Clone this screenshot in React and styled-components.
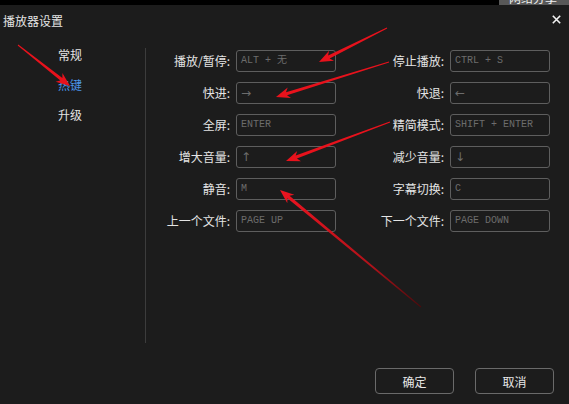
import React from "react";
import styled, { createGlobalStyle } from "styled-components";

const Global = createGlobalStyle`
  html, body { margin: 0; padding: 0; background: #1c1c1c; }
  body { font-family: "Noto Sans CJK SC", "Noto Sans", sans-serif; overflow: hidden; }
  #root { width: 569px; height: 404px; position: relative; }
`;

const Page = styled.div`
  width: 569px;
  height: 404px;
  background: #1c1c1c;
  display: flex;
  flex-direction: column;
  position: relative;
  overflow: hidden;
`;

const TopStrip = styled.div`
  height: 5px;
  background: #000;
  display: flex;
  justify-content: flex-end;
  flex-shrink: 0;
`;

const GrayTab = styled.div`
  width: 70px;
  height: 5px;
  background: #585858;
  overflow: hidden;
  color: #f0f0f0;
  font-size: 12px;
  line-height: 12px;
  padding-left: 10px;
  box-sizing: border-box;
  white-space: nowrap;
`;

const TabText = styled.div`
  margin-top: -8px;
`;

const TitleBar = styled.div`
  height: 30px;
  display: flex;
  align-items: center;
  justify-content: space-between;
  padding: 0 8px 0 3px;
  flex-shrink: 0;
`;

const Title = styled.div`
  color: #e4e4e4;
  font-size: 12px;
`;

const Close = styled.div`
  width: 9px;
  height: 9px;
  display: flex;
  margin-top: -1px;
`;

const Body = styled.div`
  height: 333px;
  display: flex;
  flex-shrink: 0;
`;

const Nav = styled.div`
  width: 145px;
  padding: 5px 0 0 58px;
  box-sizing: border-box;
  display: flex;
  flex-direction: column;
`;

const NavItem = styled.div`
  height: 30px;
  line-height: 30px;
  font-size: 12px;
  color: ${(p) => (p.$active ? "#4b95e6" : "#e4e4e4")};
`;

const Divider = styled.div`
  width: 1px;
  height: 295px;
  margin-top: 13px;
  background: #3c3c3c;
`;

const Form = styled.div`
  padding: 15px 0 0 14px;
  display: grid;
  grid-template-columns: 70px 100px 102px 100px;
  grid-auto-rows: 22px;
  column-gap: 6px;
  row-gap: 10px;
  align-content: start;
`;

const Label = styled.div`
  color: #e4e4e4;
  font-size: 12px;
  text-align: right;
  line-height: 22px;
  white-space: nowrap;
`;

const KeyBox = styled.div`
  border: 1px solid #5e5e5e;
  border-radius: 3px;
  box-sizing: border-box;
  height: 22px;
  padding-left: 4px;
  color: #6c6c6c;
  font-family: ${(p) =>
    p.$glyph ? '"DejaVu Sans", sans-serif' : '"Liberation Mono", "Noto Sans CJK SC", monospace'};
  font-size: ${(p) => (p.$glyph ? "12px" : "10px")};
  line-height: 20px;
  white-space: nowrap;
  overflow: hidden;
`;

const Footer = styled.div`
  display: flex;
  justify-content: flex-end;
  gap: 21px;
  padding-right: 15px;
`;

const Button = styled.div`
  width: 79px;
  height: 26px;
  border: 1px solid #6a6a6a;
  border-radius: 4px;
  box-sizing: border-box;
  display: flex;
  align-items: center;
  justify-content: center;
  color: #e8e8e8;
  font-size: 12px;
`;

const Overlay = styled.svg`
  position: absolute;
  left: 0;
  top: 0;
  pointer-events: none;
`;

function arrowPoints(x1, y1, x2, y2, tw = 1, sw = 3.2, hl = 14, hw = 11) {
  const dx = x2 - x1;
  const dy = y2 - y1;
  const L = Math.hypot(dx, dy);
  const ux = dx / L;
  const uy = dy / L;
  const nx = -uy;
  const ny = ux;
  const bx = x2 - ux * hl;
  const by = y2 - uy * hl;
  const nbx = x2 - ux * (hl - 3);
  const nby = y2 - uy * (hl - 3);
  const pts = [
    [x1 + (nx * tw) / 2, y1 + (ny * tw) / 2],
    [nbx + (nx * sw) / 2, nby + (ny * sw) / 2],
    [bx + (nx * hw) / 2, by + (ny * hw) / 2],
    [x2, y2],
    [bx - (nx * hw) / 2, by - (ny * hw) / 2],
    [nbx - (nx * sw) / 2, nby - (ny * sw) / 2],
    [x1 - (nx * tw) / 2, y1 - (ny * tw) / 2],
  ];
  return pts.map((p) => p.map((v) => v.toFixed(1)).join(",")).join(" ");
}

const arrows = [
  { id: "a", from: [387, 28], to: [319, 62] },
  { id: "b", from: [389, 62], to: [276, 97] },
  { id: "c", from: [390, 122], to: [286, 161] },
  { id: "d", from: [421, 307], to: [280, 190], fade: true },
  { id: "e", from: [18, 45], to: [70, 86] },
];

const glyphs = new Set(["→", "←", "↑", "↓"]);

const rows = [
  ["播放/暂停:", "ALT + 无", "停止播放:", "CTRL + S"],
  ["快进:", "→", "快退:", "←"],
  ["全屏:", "ENTER", "精简模式:", "SHIFT + ENTER"],
  ["增大音量:", "↑", "减少音量:", "↓"],
  ["静音:", "M", "字幕切换:", "C"],
  ["上一个文件:", "PAGE UP", "下一个文件:", "PAGE DOWN"],
];

export default function App() {
  return (
    <>
      <Global />
      <Page>
        <TopStrip>
          <GrayTab>
            <TabText>网络分享</TabText>
          </GrayTab>
        </TopStrip>
        <TitleBar>
          <Title>播放器设置</Title>
          <Close>
            <svg width="9" height="9" viewBox="0 0 9 9">
              <path d="M0.8 0.8 L8.2 8.2 M8.2 0.8 L0.8 8.2" stroke="#f2f2f2" strokeWidth="1.6" />
            </svg>
          </Close>
        </TitleBar>
        <Body>
          <Nav>
            <NavItem>常规</NavItem>
            <NavItem $active>热键</NavItem>
            <NavItem>升级</NavItem>
          </Nav>
          <Divider />
          <Form>
            {rows.map((r, i) => (
              <React.Fragment key={i}>
                <Label>{r[0]}</Label>
                <KeyBox $glyph={glyphs.has(r[1])}>{r[1]}</KeyBox>
                <Label>{r[2]}</Label>
                <KeyBox $glyph={glyphs.has(r[3])}>{r[3]}</KeyBox>
              </React.Fragment>
            ))}
          </Form>
        </Body>
        <Footer>
          <Button>确定</Button>
          <Button>取消</Button>
        </Footer>
        <Overlay width="569" height="404" viewBox="0 0 569 404">
          <defs>
            <linearGradient id="fadeD" gradientUnits="userSpaceOnUse" x1="421" y1="307" x2="280" y2="190">
              <stop offset="0" stopColor="#4a0a0c" />
              <stop offset="0.35" stopColor="#b0121a" />
              <stop offset="1" stopColor="#ee1420" />
            </linearGradient>
          </defs>
          {arrows.map((a) => (
            <polygon
              key={a.id}
              points={arrowPoints(a.from[0], a.from[1], a.to[0], a.to[1])}
              fill={a.fade ? "url(#fadeD)" : "#e8121c"}
            />
          ))}
        </Overlay>
      </Page>
    </>
  );
}
